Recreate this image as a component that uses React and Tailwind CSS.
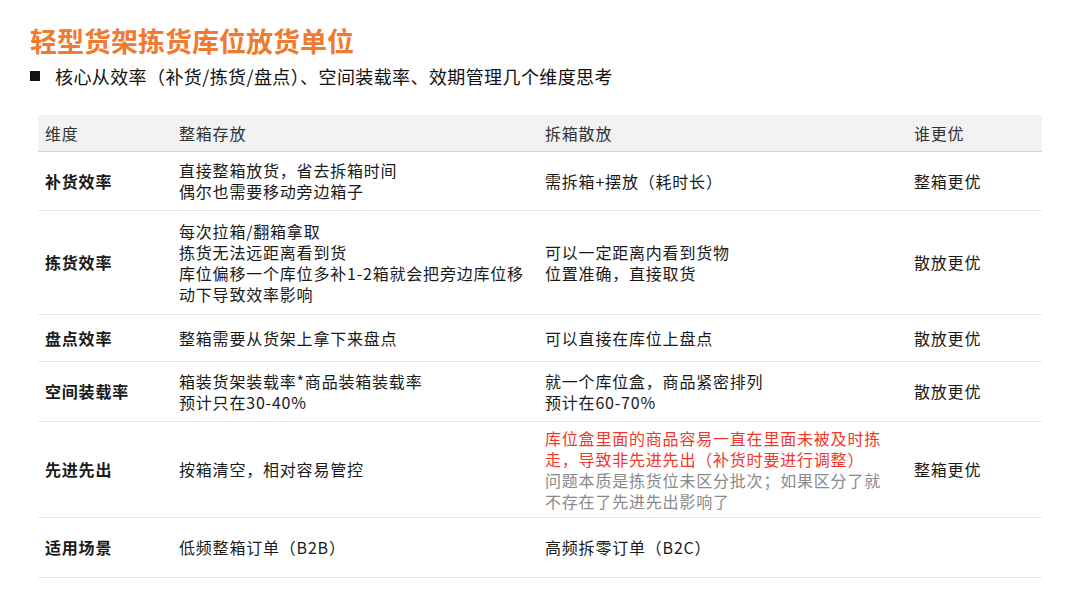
const rows = [
  {
    h: "h-[59px]",
    dim: "补货效率",
    whole: ["直接整箱放货，省去拆箱时间", "偶尔也需要移动旁边箱子"],
    loose: [{ t: "需拆箱+摆放（耗时长）" }],
    win: "整箱更优",
  },
  {
    h: "h-[104px]",
    dim: "拣货效率",
    whole: [
      "每次拉箱/翻箱拿取",
      "拣货无法远距离看到货",
      "库位偏移一个库位多补1-2箱就会把旁边库位移",
      "动下导致效率影响",
    ],
    loose: [{ t: "可以一定距离内看到货物" }, { t: "位置准确，直接取货" }],
    win: "散放更优",
  },
  {
    h: "h-[47px]",
    dim: "盘点效率",
    whole: ["整箱需要从货架上拿下来盘点"],
    loose: [{ t: "可以直接在库位上盘点" }],
    win: "散放更优",
  },
  {
    h: "h-[60px]",
    dim: "空间装载率",
    whole: ["箱装货架装载率*商品装箱装载率", "预计只在30-40%"],
    loose: [{ t: "就一个库位盒，商品紧密排列" }, { t: "预计在60-70%" }],
    win: "散放更优",
  },
  {
    h: "h-[96px]",
    dim: "先进先出",
    whole: ["按箱清空，相对容易管控"],
    loose: [
      { t: "库位盒里面的商品容易一直在里面未被及时拣", c: "text-[#f2382c]" },
      { t: "走，导致非先进先出（补货时要进行调整）", c: "text-[#f2382c]" },
      { t: "问题本质是拣货位未区分批次；如果区分了就", c: "text-[#8a8a8a]" },
      { t: "不存在了先进先出影响了", c: "text-[#8a8a8a]" },
    ],
    win: "整箱更优",
  },
  {
    h: "h-[60px]",
    dim: "适用场景",
    whole: ["低频整箱订单（B2B）"],
    loose: [{ t: "高频拆零订单（B2C）" }],
    win: "",
  },
];

const grid = "grid grid-cols-[134px_366px_369px_1fr]";

export default function App() {
  return (
    <div
      className="w-[1080px] h-[603px] bg-white overflow-hidden"
      style={{ fontFamily: '"Noto Sans CJK SC", "Noto Sans", sans-serif' }}
    >
      <div className="pl-[30px] pt-[24px]">
        <h1 className="text-[27px] leading-[34px] font-bold text-[#ee7b30]">
          轻型货架拣货库位放货单位
        </h1>
        <div className="mt-[5px] flex items-center gap-[15px] text-[18px] leading-[26px] tracking-[0.4px] text-[#111]">
          <span className="w-[10px] h-[10px] bg-[#111]" />
          <span>核心从效率（补货/拣货/盘点）、空间装载率、效期管理几个维度思考</span>
        </div>
      </div>

      <div className="ml-[38px] mt-[26px] w-[1004px] text-[16px] tracking-[0.8px] leading-[21px] text-[#1a1a1a]">
        <div className={`${grid} h-[37px] items-center bg-[#f2f2f2] border-b border-[#d4d4d4] text-[#333]`}>
          <div className="pl-[7px]">维度</div>
          <div className="pl-[7px]">整箱存放</div>
          <div className="pl-[7px]">拆箱散放</div>
          <div className="pl-[7px]">谁更优</div>
        </div>
        {rows.map((r) => (
          <div
            key={r.dim}
            className={`${grid} ${r.h} items-center border-b border-[#e6e6e6]`}
          >
            <div className="pl-[7px] font-bold">{r.dim}</div>
            <div className="pl-[7px]">
              {r.whole.map((l) => (
                <div key={l}>{l}</div>
              ))}
            </div>
            <div className="pl-[7px]">
              {r.loose.map((l) => (
                <div key={l.t} className={l.c}>
                  {l.t}
                </div>
              ))}
            </div>
            <div className="pl-[7px]">{r.win}</div>
          </div>
        ))}
      </div>
    </div>
  );
}
